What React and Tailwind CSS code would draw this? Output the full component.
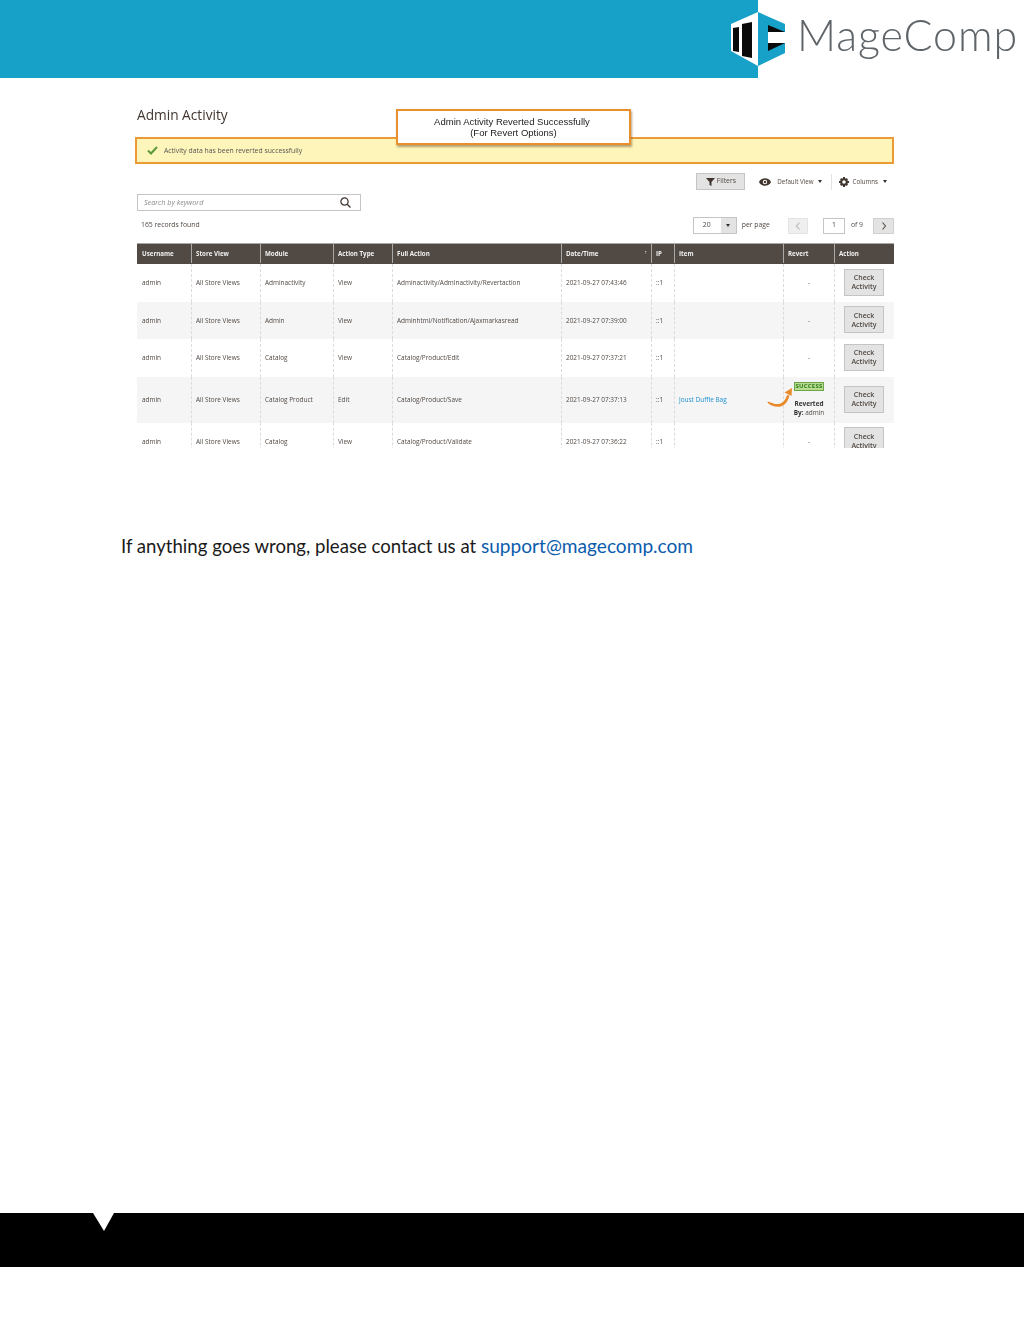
const columns = [
  { label: "Username" },
  { label: "Store View" },
  { label: "Module" },
  { label: "Action Type" },
  { label: "Full Action" },
  { label: "Date/Time", sorted: true },
  { label: "IP" },
  { label: "Item" },
  { label: "Revert" },
  { label: "Action" },
];

const rows = [
  { module: "Adminactivity", type: "View", action: "Adminactivity/Adminactivity/Revertaction", time: "2021-09-27 07:43:46", height: "h-[38px]" },
  { module: "Admin", type: "View", action: "Adminhtml/Notification/Ajaxmarkasread", time: "2021-09-27 07:39:00", height: "h-[37px]", shaded: true },
  { module: "Catalog", type: "View", action: "Catalog/Product/Edit", time: "2021-09-27 07:37:21", height: "h-[38px]" },
  { module: "Catalog Product", type: "Edit", action: "Catalog/Product/Save", time: "2021-09-27 07:37:13", height: "h-[46px]", shaded: true, item: "Joust Duffle Bag", reverted: true },
  { module: "Catalog", type: "View", action: "Catalog/Product/Validate", time: "2021-09-27 07:36:22", height: "h-[37px]" },
];

const gridCols = "grid grid-cols-[54px_69px_73px_59px_169px_90px_23px_109px_51px_60px]";
const cell = "flex items-center pl-[4px] border-l border-dashed border-[#dcdcdc] first:border-l-0 first:pl-[5px]";

// coordinates are page x minus 726
const Logo = () => (
  <svg width="62" height="78" viewBox="0 0 62 78" className="absolute left-[726px] top-0 blur-[0.4px]">
    <polygon points="32,12 5,24 5,51 32,66" fill="#fff" />
    <polygon points="7,28 13,27 13,52 7,51" fill="#0a0a0a" />
    <polygon points="16,24 26,22 26,58 16,56" fill="#0a0a0a" />
    <polygon points="32,12 59,24 59,53 32,66" fill="#17a0c8" />
    <polygon points="42,32 60,32 60,43 42,43" fill="#fff" />
    <polygon points="42,25 59,32 42,32" fill="#0a0a0a" />
    <polygon points="42,43 59,43 42,51" fill="#0a0a0a" />
  </svg>
);

const Chevron = ({ left }) => (
  <svg width="6" height="8" viewBox="0 0 6 8" fill="none" stroke="currentColor" strokeWidth="1.1">
    <path d={left ? "M4.5 .5 1.5 4l3 3.5" : "M1.5 .5 4.5 4l-3 3.5"} />
  </svg>
);

const Caret = () => <span className="w-0 h-0 border-x-[2px] border-x-transparent border-t-[3px] border-t-[#303030]" />;

const Row = ({ row }) => (
  <div className={`${gridCols} ${row.height} ${row.shaded ? "bg-[#f5f5f5]" : "bg-white"} text-[6.45px] text-[#514943]`}>
    <div className={cell}>admin</div>
    <div className={cell}>All Store Views</div>
    <div className={cell}>{row.module}</div>
    <div className={cell}>{row.type}</div>
    <div className={cell}>{row.action}</div>
    <div className={cell}>{row.time}</div>
    <div className={cell}>::1</div>
    <div className={cell}>
      {row.item && <span className="text-[#1e8fd0]">{row.item}</span>}
    </div>
    <div className={`${cell} flex-col !items-center !pl-0 justify-center`}>
      {row.reverted ? (
        <div className="flex flex-col items-center pb-[2px]">
          <span className="px-[1px] bg-[#b9dc8e] border border-[#6aa548] text-[#2f7a1e] font-bold text-[6px] leading-[7px] tracking-[0.2px]">SUCCESS</span>
          <span className="mt-[9px] font-bold leading-[8px] text-[#333]">Reverted</span>
          <span className="leading-[9px]"><b className="text-[#333]">By:</b> admin</span>
        </div>
      ) : (
        "-"
      )}
    </div>
    <div className={`${cell} !pl-[9px] pb-[2px]`}>
      <span className="w-[40px] h-[27px] shrink-0 flex items-center justify-center text-center bg-[#e3e3e3] border border-[#c4c4c4] text-[#514943] text-[7px] leading-[9px] font-semibold">
        Check<br />Activity
      </span>
    </div>
  </div>
);

export default function App() {
  return (
    <div className="relative w-[1024px] h-[1325px] bg-white overflow-hidden font-['Open_Sans',sans-serif]">
      <header className="relative h-[78px] bg-white">
        <div className="w-[758px] h-full bg-[#17a0c8]" />
        <Logo />
        <span className="absolute left-[797px] top-[7px] text-[43px] leading-[56px] tracking-[0.9px] text-[#5f6468] font-['Lato',sans-serif] font-light blur-[0.3px]">MageComp</span>
      </header>

      <section className="relative h-[370px] overflow-hidden pl-[135px] pr-[130px] blur-[0.35px]">
        <h1 className="pl-[2px] pt-[27px] text-[13.7px] leading-[19px] text-[#41362f]">Admin Activity</h1>

        <div className="mt-[13px] h-[27px] flex items-center pl-[10px] bg-[#fdf5b9] border-2 border-[#ec9a35]">
          <svg width="11" height="9" viewBox="0 0 11 9" fill="none" stroke="#5b9a3c" strokeWidth="2">
            <path d="M1 4.5 4 7.5 10 1" />
          </svg>
          <span className="ml-[6px] pt-[1px] text-[6.85px] text-[#555]">Activity data has been reverted successfully</span>
        </div>

        <div className="absolute left-[396px] top-[31px] w-[235px] h-[36px] pb-[1px] flex flex-col items-center justify-center bg-white border-2 border-[#e98f2c] shadow-[1px_2px_2px_rgba(120,90,50,0.55)] font-['Liberation_Sans',sans-serif] text-[9.5px] leading-[11px] text-[#222]">
          <span className="pr-[3px]">Admin Activity Reverted Successfully</span>
          <span>(For Revert Options)</span>
        </div>

        <div className="mt-[9px] h-[17px] flex items-center justify-end pr-[7px] text-[6.2px] text-[#514943]">
          <span className="w-[49px] h-[17px] flex items-center justify-center gap-[2px] bg-[#e3e3e3] border border-[#c4c4c4] text-[6.8px]">
            <svg width="9" height="8" viewBox="0 0 9 8" fill="#41362f"><path d="M0 0h9L5.500 4v4l-2-1V4z" /></svg>
            Filters
          </span>
          <svg width="12" height="8" viewBox="0 0 12 8" className="ml-[14px]">
            <path d="M0 4c2-5 10-5 12 0-2 5-10 5-12 0z" fill="#41362f" />
            <circle cx="6" cy="4" r="2.2" fill="#fff" />
            <circle cx="6" cy="4" r="1.2" fill="#41362f" />
          </svg>
          <span className="ml-[6px]">Default View</span>
          <span className="ml-[4px] flex"><Caret /></span>
          <span className="ml-[9px] h-[16px] border-l border-[#e3e3e3]" />
          <svg width="10" height="10" viewBox="0 0 10 10" className="ml-[7px]">
            <circle cx="5" cy="5" r="2.8" fill="none" stroke="#41362f" strokeWidth="2" />
            <path d="M4 0h2v2H4zM4 8h2v2H4zM0 4h2v2H0zM8 4h2v2H8zM1 2.400 2.400 1l1 1L2 3.400zM6.600 8l1 1L9 7.600l-1-1zM1 7.600 2.400 9l1-1L2 6.600zM6.600 2l1-1L9 2.400l-1 1z" fill="#41362f" />
          </svg>
          <span className="ml-[4px]">Columns</span>
          <span className="ml-[5px] flex"><Caret /></span>
        </div>

        <div className="mt-[4px] ml-[2px] w-[224px] h-[17px] flex items-center justify-between pl-[6px] pr-[9px] border border-[#c4c4c4] italic text-[7.2px] text-[#8a8a8a]">
          Search by keyword
          <svg width="11" height="11" viewBox="0 0 11 11" fill="none" stroke="#41362f" strokeWidth="1.3">
            <circle cx="4.5" cy="4.5" r="3.6" />
            <path d="M7.2 7.2 10.5 10.5" />
          </svg>
        </div>

        <div className="mt-[6px] pl-[6px] h-[17px] flex items-center text-[6.85px] text-[#514943]">
          <span>165 records found</span>
          <div className="ml-auto flex items-center">
            <span className="w-[44px] h-[17px] flex border border-[#c4c4c4]">
              <span className="flex-1 flex items-center justify-center pr-[1px]">20</span>
              <span className="w-[15px] flex items-center justify-center bg-[#e3e3e3]"><Caret /></span>
            </span>
            <span className="ml-[5px]">per page</span>
            <span className="ml-[18px] w-[20px] h-[16px] flex items-center justify-center bg-[#efefef] border border-[#e3e3e3] text-[#b5b5b5]"><Chevron left /></span>
            <span className="ml-[15px] w-[22px] h-[16px] flex items-center justify-center border border-[#c4c4c4]">1</span>
            <span className="ml-[6px]">of 9</span>
            <span className="ml-[10px] w-[21px] h-[16px] flex items-center justify-center bg-[#e3e3e3] border border-[#d0d0d0] text-[#514943]"><Chevron /></span>
          </div>
        </div>

        <div className="mt-[9px] ml-[2px] w-[757px]">
          <div className={`${gridCols} h-[21px] pb-[1px] bg-[#514943] border-t border-[#a8a8a8] text-[6.2px] font-bold text-[#f2f2f2]`}>
            {columns.map((c, i) => (
              <div key={c.label} className={`relative flex items-center ${i > 0 ? "pl-[4px] border-l border-[#a8a8a8]" : "pl-[5px]"}`}>
                {c.label}
                {c.sorted && <span className="absolute right-[4px] top-[5px] text-[5px]">↑</span>}
              </div>
            ))}
          </div>
          {rows.map((r) => (
            <Row key={r.time} row={r} />
          ))}
        </div>

        <svg width="26" height="20" viewBox="0 0 26 20" className="absolute left-[767px] top-[309px]">
          <path d="M1 14.5c5 2.2 9 3.6 13 1.8 3.5-1.6 5-5 6-8.3l2.4.6c-1 4.6-3.2 8.600-7.400 10.400-4.800 2-10.500 .2-14.500-3.200z" fill="#e98a2a" />
          <polygon points="17.500,5.500 25,1 24.500,9" fill="#e98a2a" />
        </svg>
      </section>

      <p className="pl-[121px] mt-[86px] text-[18.6px] leading-[24px] text-[#1a1a1a] font-['Lato',sans-serif]">
        If anything goes wrong, please contact us at <a className="text-[19.1px] text-[#0b5cad]">support@magecomp.com</a>
      </p>

      <footer className="absolute left-0 top-[1213px] w-full h-[54px] bg-black">
        <svg width="22" height="20" viewBox="0 0 22 20" className="absolute left-[93px] top-0 blur-[0.5px]">
          <polygon points="0,0 21,0 11,18" fill="#fff" />
        </svg>
      </footer>
    </div>
  );
}
